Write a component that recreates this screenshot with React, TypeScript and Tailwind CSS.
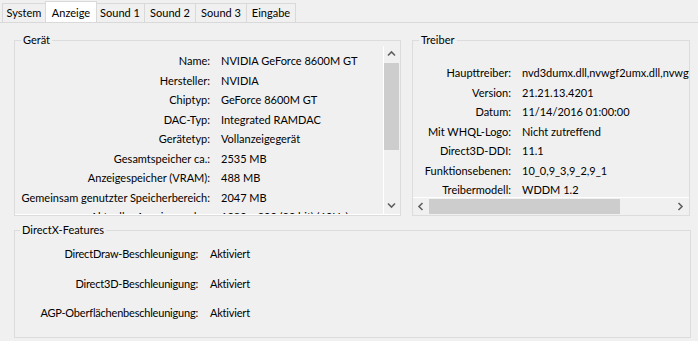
const tabs = [
  { label: "System", w: "w-[44px]" },
  { label: "Anzeige", w: "w-[52px]", active: true },
  { label: "Sound 1", w: "w-[50px]" },
  { label: "Sound 2", w: "w-[52px]" },
  { label: "Sound 3", w: "w-[52px]" },
  { label: "Eingabe", w: "w-[50px]" },
];

const geraet = [
  ["Name:", "NVIDIA GeForce 8600M GT"],
  ["Hersteller:", "NVIDIA"],
  ["Chiptyp:", "GeForce 8600M GT"],
  ["DAC-Typ:", "Integrated RAMDAC"],
  ["Gerätetyp:", "Vollanzeigegerät"],
  ["Gesamtspeicher ca.:", "2535 MB"],
  ["Anzeigespeicher (VRAM):", "488 MB"],
  ["Gemeinsam genutzter Speicherbereich:", "2047 MB"],
  ["Aktueller Anzeigemodus:", "1280 x 800 (32 bit) (60Hz)"],
  ["Monitor:", "Generic PnP Monitor"],
];

const treiber = [
  ["Haupttreiber:", "nvd3dumx.dll,nvwgf2umx.dll,nvwgf2umx.dll,nvwgf2umx.dll,nvd3dum,nvwgf2um"],
  ["Version:", "21.21.13.4201"],
  ["Datum:", "11/14/2016 01:00:00"],
  ["Mit WHQL-Logo:", "Nicht zutreffend"],
  ["Direct3D-DDI:", "11.1"],
  ["Funktionsebenen:", "10_0,9_3,9_2,9_1"],
  ["Treibermodell:", "WDDM 1.2"],
];

const features = [
  ["DirectDraw-Beschleunigung:", "Aktiviert"],
  ["Direct3D-Beschleunigung:", "Aktiviert"],
  ["AGP-Oberflächenbeschleunigung:", "Aktiviert"],
];

function Chevron({ dir }: { dir: "up" | "down" | "left" | "right" }) {
  const pts = {
    up: "1,5.5 4.5,2 8,5.5",
    down: "1,2.5 4.5,6 8,2.5",
    left: "5.5,1 2,4.5 5.5,8",
    right: "2.5,1 6,4.5 2.5,8",
  }[dir];
  return (
    <svg width="9" height="9" viewBox="0 0 9 9">
      <polyline points={pts} fill="none" stroke="#606060" strokeWidth="1.6" />
    </svg>
  );
}

export default function App() {
  return (
    <div className="w-[698px] h-[341px] overflow-hidden bg-[#f0f0f0] text-[11px] text-black font-['Lato',sans-serif]">
      {/* tab strip */}
      <div className="h-[22px] flex items-end pl-[2px]">
        {tabs.map((t) =>
          t.active ? (
            <div
              key={t.label}
              className={`${t.w} h-[21px] bg-white border border-b-0 border-[#d9d9d9] flex items-start justify-center pt-[3px] -mx-px relative z-10`}
            >
              {t.label}
            </div>
          ) : (
            <div
              key={t.label}
              className={`${t.w} h-[19px] border border-b-0 border-[#d9d9d9] flex items-center justify-center pt-px -ml-px first:ml-0`}
            >
              {t.label}
            </div>
          )
        )}
      </div>

      {/* page */}
      <div className="border-t border-[#d9d9d9] pt-[11px] pl-[14px]">
        <div className="flex gap-[11px]">
          {/* Gerät */}
          <fieldset className="w-[387px] min-w-0 shrink-0 h-[182px] border border-[#dcdcdc]">
            <legend className="ml-[6px] px-[2px] leading-[12px]">Gerät</legend>
            <div className="h-[169px] flex border-b border-white">
              <div className="flex-1 min-w-0 overflow-hidden pt-[6px]">
                {geraet.map(([k, v]) => (
                  <div key={k} className="h-[19.45px] flex items-center whitespace-nowrap">
                    <div className="w-[195px] text-right shrink-0">{k}</div>
                    <div className="pl-[11px]">{v}</div>
                  </div>
                ))}
              </div>
              <div className="w-[17px] shrink-0 border-l border-white flex flex-col">
                <div className="h-[17px] flex items-center justify-center pr-px">
                  <Chevron dir="up" />
                </div>
                <div className="w-[15px] h-[87px] bg-[#cdcdcd]" />
                <div className="flex-1" />
                <div className="h-[17px] flex items-center justify-center pr-px">
                  <Chevron dir="down" />
                </div>
              </div>
            </div>
          </fieldset>

          {/* Treiber */}
          <fieldset className="w-[278px] min-w-0 shrink-0 h-[182px] border border-[#dcdcdc]">
            <legend className="ml-[6px] px-[2px] leading-[12px]">Treiber</legend>
            <div className="h-[169px] w-[276px] flex flex-col">
              <div className="flex-1 min-h-0 overflow-hidden pt-[17.5px]">
                {treiber.map(([k, v]) => (
                  <div key={k} className="h-[19.5px] flex items-center whitespace-nowrap">
                    <div className="w-[98px] text-right shrink-0">{k}</div>
                    <div className="pl-[11px]">{v}</div>
                  </div>
                ))}
              </div>
              <div className="h-[18px] shrink-0 border-t border-white flex">
                <div className="w-[16px] flex items-center justify-center">
                  <Chevron dir="left" />
                </div>
                <div className="w-[191px] h-[15px] mt-px bg-[#cdcdcd]" />
                <div className="flex-1" />
                <div className="w-[17px] flex items-center justify-center">
                  <Chevron dir="right" />
                </div>
              </div>
            </div>
          </fieldset>
        </div>

        {/* DirectX-Features */}
        <fieldset className="mt-[8px] w-[677px] min-w-0 h-[114px] border border-[#dcdcdc]">
          <legend className="ml-[5px] px-[2px] leading-[12px]">DirectX-Features</legend>
          <div className="pt-[3.5px] tracking-[-0.2px]">
            {features.map(([k, v]) => (
              <div key={k} className="h-[29.5px] flex items-center whitespace-nowrap">
                <div className="w-[183px] text-right shrink-0">{k}</div>
                <div className="pl-[12px]">{v}</div>
              </div>
            ))}
          </div>
        </fieldset>
      </div>
    </div>
  );
}
